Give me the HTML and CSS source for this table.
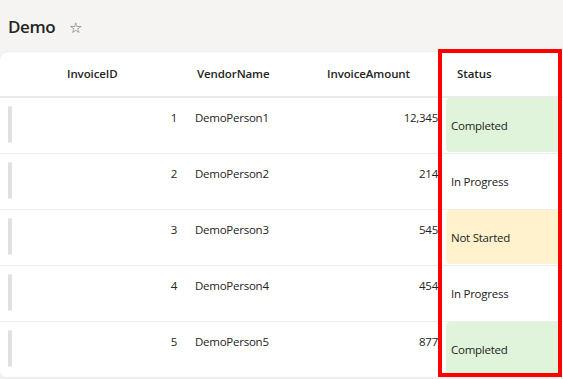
FILE: index.html
```html
<html>

<head>
    <meta charset="utf-8" />
    <link rel="stylesheet" href="styles.css">
</head>

<body>
    <div class="title">
        <h1>Demo</h1>
        <span class="star">&#9734;</span>
    </div>

    <div class="card">
        <div class="grid">
            <!-- header -->
            <div class="th"></div>
            <div class="th th-id">InvoiceID</div>
            <div class="th th-vendor">VendorName</div>
            <div class="th th-amount">InvoiceAmount</div>
            <div class="th th-status">Status</div>

            <!-- rows -->
            <div class="td"><span class="handle"></span></div>
            <div class="td num">1</div>
            <div class="td vendor">DemoPerson1</div>
            <div class="td num amount">12,345</div>
            <div class="td status"><span class="pill done">Completed</span></div>

            <div class="td"><span class="handle"></span></div>
            <div class="td num">2</div>
            <div class="td vendor">DemoPerson2</div>
            <div class="td num amount">214</div>
            <div class="td status"><span class="pill">In Progress</span></div>

            <div class="td"><span class="handle"></span></div>
            <div class="td num">3</div>
            <div class="td vendor">DemoPerson3</div>
            <div class="td num amount">545</div>
            <div class="td status"><span class="pill todo">Not Started</span></div>

            <div class="td"><span class="handle"></span></div>
            <div class="td num">4</div>
            <div class="td vendor">DemoPerson4</div>
            <div class="td num amount">454</div>
            <div class="td status"><span class="pill">In Progress</span></div>

            <div class="td"><span class="handle"></span></div>
            <div class="td num">5</div>
            <div class="td vendor">DemoPerson5</div>
            <div class="td num amount">877</div>
            <div class="td status"><span class="pill done">Completed</span></div>
        </div>
    </div>

    <!-- highlight around the Status column -->
    <div class="highlight"></div>
</body>
</html>
```

FILE: styles.css
```css
body {
    margin: 0;
    background-color: #f5f4f2;
    font-family: "Open Sans", "Noto Sans", sans-serif;
    color: #242424;
    overflow: hidden;
}

.title {
    display: flex;
    align-items: center;
    height: 52px;
    padding-left: 8px;
}

h1 {
    margin: 0;
    font-size: 17px;
    font-weight: 600;
    letter-spacing: -0.4px;
}

.star {
    margin-left: 14px;
    margin-top: 2px;
    font-size: 15px;
    color: #5a5a5a;
}

.card {
    background-color: #ffffff;
    border-radius: 8px 0 0 8px;
    box-shadow: 0 0 2px rgba(0, 0, 0, 0.08);
}

.grid {
    display: grid;
    grid-template-columns: 20px 165px 115px 138px 125px;
    font-size: 11.5px;
    letter-spacing: -0.25px;
}

.th {
    height: 44px;
    line-height: 44px;
    font-weight: 600;
    letter-spacing: -0.1px;
    border-bottom: 2px solid #ebebeb;
}

.th-id {
    padding-left: 47px;
}

.th-vendor {
    padding-left: 12px;
}

.th-amount {
    text-align: right;
    padding-right: 28px;
}

.th-status {
    padding-left: 19px;
}

.td {
    height: 56px;
    border-bottom: 1px solid #ededed;
    padding-top: 12px;
    box-sizing: border-box;
}

.num {
    text-align: right;
    padding-right: 8px;
}

.amount {
    padding-right: 0;
}

.vendor {
    padding-left: 10px;
}

.handle {
    display: block;
    width: 4px;
    height: 37px;
    margin-left: 8px;
    margin-top: -4px;
    border-radius: 2px;
    background-color: #e0e0e0;
}

.status {
    padding: 0 1px 1px 8px;
}

.pill {
    display: flex;
    align-items: center;
    height: 100%;
    padding-left: 5px;
    padding-top: 1px;
    box-sizing: border-box;
    border-radius: 4px;
}

.done {
    background-color: #dff4da;
}

.todo {
    background-color: #fff2cc;
}

.highlight {
    position: absolute;
    left: 438px;
    top: 49px;
    width: 116px;
    height: 320px;
    border: 4px solid #ff0000;
}
```
